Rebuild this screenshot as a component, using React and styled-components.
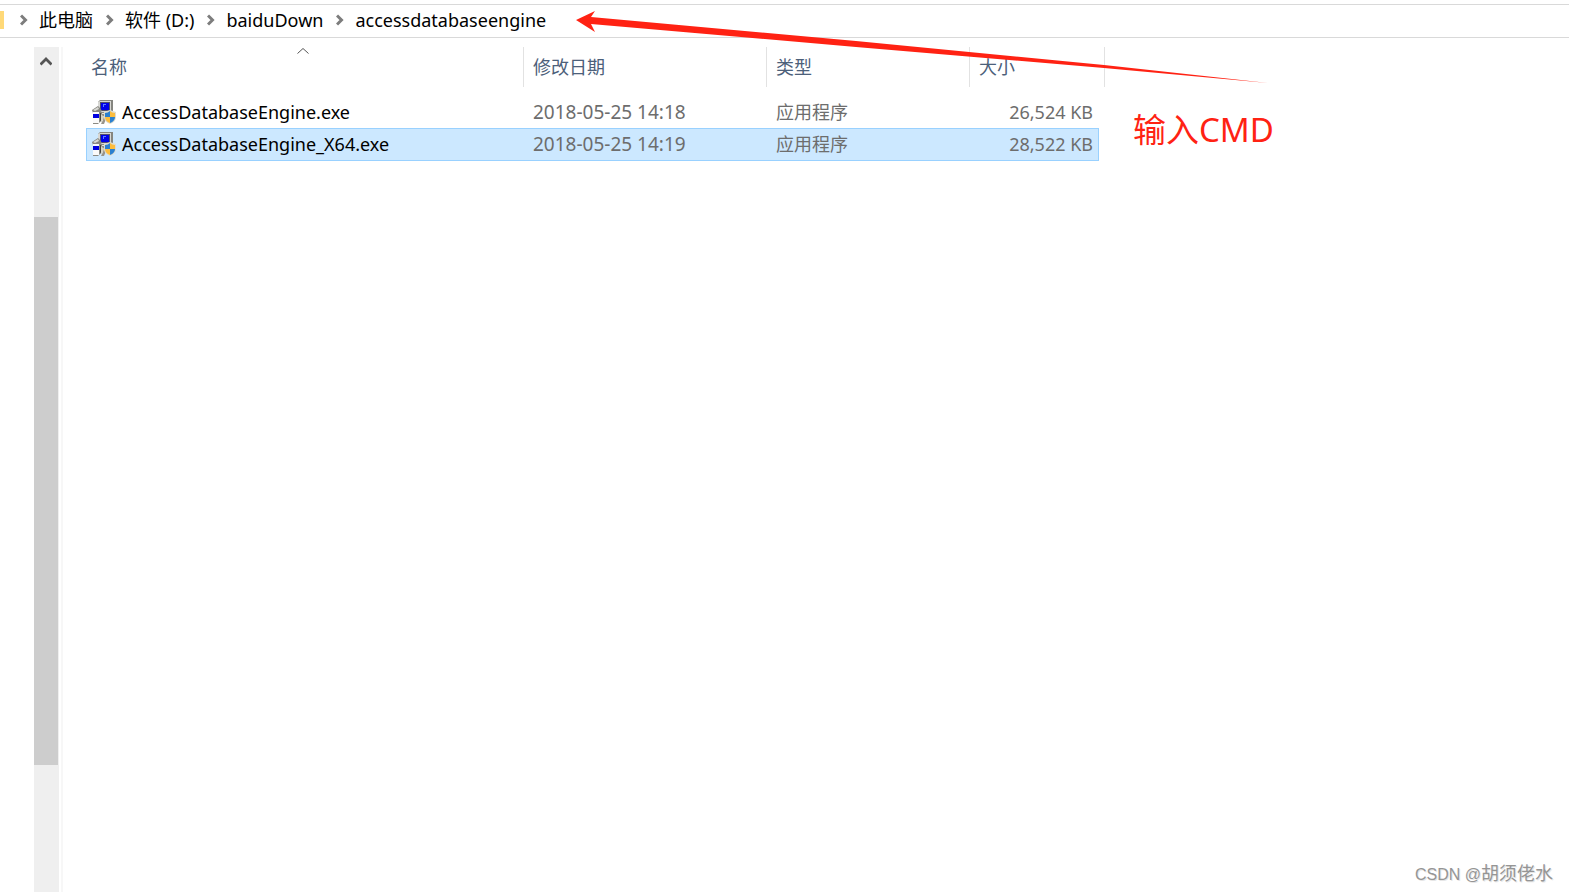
import styled, { createGlobalStyle } from 'styled-components';

const GlobalStyle = createGlobalStyle`
	* {
		box-sizing: border-box;
	}
	body {
		margin: 0;
		background-color: #fff;
		color: #000;
		font-family: 'Noto Sans', 'Noto Sans CJK SC', sans-serif;
		font-size: 18px;
		line-height: 24px;
	}
`;

const Explorer = styled.div`
	position: relative;
	display: flex;
	flex-direction: column;
	min-height: 100vh;
	padding-top: 4px;
	overflow: hidden;
`;

const AddressBar = styled.nav`
	display: flex;
	align-items: center;
	height: 34px;
	padding-bottom: 2px;
	border-top: 1px solid #d9d9d9;
	border-bottom: 1px solid #d9d9d9;
`;

const Folder = styled.span`
	width: 4px;
	height: 18px;
	margin-right: 16px;
	background-color: #ffd978;
`;

const Crumbs = styled.ol`
	display: flex;
	margin: 0;
	padding: 0;
	list-style: none;
`;

const Crumb = styled.li`
	display: flex;
	align-items: center;
	gap: 11px;
	padding-right: 13px;
	& a {
		color: #000;
		text-decoration: none;
		white-space: nowrap;
	}
`;

const Body = styled.div`
	display: flex;
	flex: 1;
	padding: 9px 0 0 34px;
`;

const ScrollBar = styled.div`
	display: flex;
	flex-direction: column;
	width: 25px;
	background-color: #efefef;
`;

const ScrollButton = styled.button`
	display: flex;
	align-items: center;
	justify-content: center;
	width: 24px;
	height: 28px;
	padding: 0;
	border: 0;
	background: none;
`;

const Track = styled.div`
	display: flex;
	flex: 1;
	flex-direction: column;
`;

const Space = styled.div`
	flex: ${props => props.$grow} 0 0;
`;

const Thumb = styled.div`
	flex: 548 0 0;
	width: 24px;
	background-color: #cdcdcd;
`;

const Pane = styled.main`
	display: flex;
	flex: 1;
	align-items: flex-start;
	gap: 28px;
	margin-left: 2px;
	padding-left: 23px;
	border-left: 2px solid #f7f7f7;
`;

const Files = styled.table`
	flex: none;
	width: 1019px;
	border-spacing: 0;
	table-layout: fixed;
`;

const Column = styled.col`
	width: ${props => props.$width}px;
`;

const Heading = styled.th`
	position: relative;
	height: 40px;
	padding: 0 0 0 ${props => (props.$first ? 5 : 9)}px;
	border-right: 1px solid #e2e2e2;
	color: #4c607a;
	font-weight: 400;
	text-align: left;
`;

const SortMark = styled.svg`
	position: absolute;
	top: 0;
	left: calc(50% - 8px);
`;

const Gap = styled.tbody`
	& td {
		height: 9px;
		padding: 0;
	}
`;

const Row = styled.tr`
	& td {
		height: 32px;
		padding: 0 0 0 9px;
		color: #6d6d6d;
	}
	& td:nth-child(1) {
		padding-left: ${props => (props.$selected ? 5 : 6)}px;
		color: #000;
	}
	& td:nth-child(2) {
		font-size: 19px;
	}
	& td:nth-child(4) {
		padding: 0 ${props => (props.$selected ? 5 : 6)}px 0 0;
		text-align: right;
	}
	${props =>
		props.$selected &&
		`
		& td:nth-child(-n + 4) {
			height: 33px;
			padding-bottom: 1px;
			border: solid #99d1ff;
			border-width: 1px 0;
			background-color: #cce8ff;
		}
		& td:nth-child(1) {
			border-left-width: 1px;
		}
		& td:nth-child(4) {
			border-right-width: 1px;
		}
	`}
`;

const FileName = styled.span`
	display: flex;
	align-items: center;
	gap: 6px;
`;

const Note = styled.p`
	margin: 61px 0 0;
	color: #ff2213;
	font-size: 33px;
	line-height: 44px;
	white-space: nowrap;
`;

/* Lies over the address bar and the column headings */
const Arrow = styled.svg`
	position: absolute;
	top: 0;
	left: 576px;
	pointer-events: none;
`;

const Watermark = styled.span`
	position: absolute;
	right: 16px;
	bottom: 5px;
	color: #959595;
	font-family: 'Liberation Sans', 'Noto Sans CJK SC', sans-serif;
	font-size: 16px;
	text-shadow: 1px 1px 0 #e6e6e6;
`;

const Author = styled.span`
	font-size: 18px;
`;

const arrPath = ['此电脑', '软件 (D:)', 'baiduDown', 'accessdatabaseengine'];

const arrFiles = [
	{ name: 'AccessDatabaseEngine.exe', date: '2018-05-25 14:18', size: '26,524 KB' },
	{
		name: 'AccessDatabaseEngine_X64.exe',
		date: '2018-05-25 14:19',
		size: '28,522 KB',
		isSelected: true
	}
];

function Separator() {
	return (
		<svg width="8" height="12" viewBox="0 0 8 12" aria-hidden="true">
			<path d="M1 1.5L5.5 6L1 10.5" fill="none" stroke="#7d7d7d" strokeWidth="3" />
		</svg>
	);
}

function InstallerIcon() {
	return (
		<svg width="24" height="24" viewBox="0 0 24 24" aria-hidden="true">
			{/* monitor and its base */}
			<path d="M6 2L8 0H21V11L19 13H6Z" fill="#85857f" />
			<path d="M6 2L8 1H19V12H6Z" fill="#d8d8d4" />
			<path d="M8 2H18V11H8Z" fill="#50506c" />
			<path d="M9 3H17V10H9Z" fill="#0000e8" />
			<path d="M11 4H14V5H12V7H11Z" fill="#5c7cff" />
			<path d="M9 13L11 12H21L23 14V16H9Z" fill="#8e8e88" />
			<path d="M10 13H21V14H10Z" fill="#e4e4e0" />
			{/* software box and disk */}
			<path d="M0 10L3 8L6 6L8 8L10 11L7 13H1Z" fill="#85857f" />
			<path d="M1 10L6 7L7 9L3 11Z" fill="#d9d9d4" />
			<path d="M1 12L3 11H9V21L6 24H1Z" fill="#8a8a84" />
			<path d="M1 12H7V23H1Z" fill="#fafafa" />
			<path d="M1 14H7V18H1Z" fill="#0000e0" />
			<path d="M8 13H9V20L8 22Z" fill="#44443f" />
			<path d="M9 14L14 19L12 24H9L11 20Z" fill="#99948a" />
			<path d="M9 14L12 17L11 20L9 23Z" fill="#d6d2c2" />
			{/* shield */}
			<path d="M18 10L24 12V17Q24 22 18 24Q12 22 12 17V12Z" fill="#dedccf" />
			<path d="M18 11V17H13V13Q16 13 18 11Z" fill="#2b80cf" />
			<path d="M18 11Q20 13 23 13V17H18Z" fill="#fdbd3d" />
			<path d="M13 17H18V23Q13 21 13 17Z" fill="#fdbd3d" />
			<path d="M18 17H23Q23 21 18 23Z" fill="#2b80cf" />
		</svg>
	);
}

export default function App() {
	return (
		<>
			<GlobalStyle />
			<Explorer>
				<AddressBar>
					<Folder />
					<Crumbs>
						{arrPath.map(item => {
							return (
								<Crumb key={item}>
									<Separator />
									<a href="#">{item}</a>
								</Crumb>
							);
						})}
					</Crumbs>
				</AddressBar>
				<Body>
					<ScrollBar>
						<ScrollButton aria-label="向上滚动">
							<svg width="12" height="10" viewBox="0 0 12 10">
								<path d="M0.5 8.5L6 3L11.5 8.5" fill="none" stroke="#555" strokeWidth="2.8" />
							</svg>
						</ScrollButton>
						<Track>
							<Space $grow={142} />
							<Thumb />
							<Space $grow={127} />
						</Track>
					</ScrollBar>
					<Pane>
						<Files>
							<colgroup>
								<Column $width={438} />
								<Column $width={243} />
								<Column $width={203} />
								<Column $width={129} />
								<Column $width={6} />
							</colgroup>
							<thead>
								<tr>
									<Heading $first>
										名称
										<SortMark width="12" height="8" viewBox="0 0 12 8">
											<path d="M0.5 6.5L6 1.5L11.5 6.5" fill="none" stroke="#555" />
										</SortMark>
									</Heading>
									<Heading>修改日期</Heading>
									<Heading>类型</Heading>
									<Heading colSpan={2}>大小</Heading>
								</tr>
							</thead>
							<Gap>
								<tr>
									<td colSpan={5} />
								</tr>
							</Gap>
							<tbody>
								{arrFiles.map(item => {
									return (
										<Row key={item.name} $selected={item.isSelected}>
											<td>
												<FileName>
													<InstallerIcon />
													{item.name}
												</FileName>
											</td>
											<td>{item.date}</td>
											<td>应用程序</td>
											<td>{item.size}</td>
											<td />
										</Row>
									);
								})}
							</tbody>
						</Files>
						<Note>输入CMD</Note>
					</Pane>
				</Body>
				<Arrow width="700" height="90" viewBox="0 0 700 90" aria-hidden="true">
					<path d="M0 20L19 11L15 17L280 41L528 65L692 83L528 68L280 47L15 24L19 32Z" fill="#ff2213" />
				</Arrow>
				<Watermark>
					CSDN @<Author>胡须佬水</Author>
				</Watermark>
			</Explorer>
		</>
	);
}
